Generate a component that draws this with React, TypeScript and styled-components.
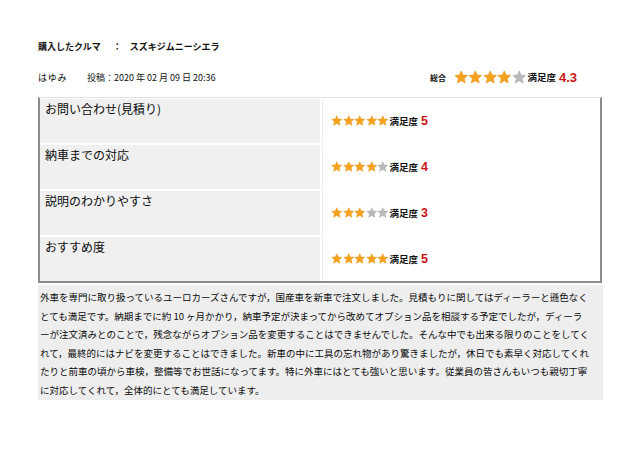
import styled, { createGlobalStyle } from "styled-components";

const GlobalStyle = createGlobalStyle`
  body {
    margin: 0;
    background: #ffffff;
    font-family: "Noto Sans CJK JP", "Noto Sans", sans-serif;
    color: #111111;
  }
`;

const ratings = [
  { label: "お問い合わせ(見積り)", value: 5 },
  { label: "納車までの対応", value: 4 },
  { label: "説明のわかりやすさ", value: 3 },
  { label: "おすすめ度", value: 5 },
];

const comment = [
  "外車を専門に取り扱っているユーロカーズさんですが，国産車を新車で注文しました。見積もりに関してはディーラーと遜色なく",
  "とても満足です。納期までに約 10 ヶ月かかり，納車予定が決まってから改めてオプション品を相談する予定でしたが，ディーラ",
  "ーが注文済みとのことで，残念ながらオプション品を変更することはできませんでした。そんな中でも出来る限りのことをしてく",
  "れて，最終的にはナビを変更することはできました。新車の中に工具の忘れ物があり驚きましたが，休日でも素早く対応してくれ",
  "たりと前車の頃から車検，整備等でお世話になってます。特に外車にはとても強いと思います。従業員の皆さんもいつも親切丁寧",
  "に対応してくれて，全体的にとても満足しています。",
];

const Star = ({ on, size }: { on: boolean; size: number }) => (
  <svg width={size} height={size} viewBox="0 0 24 24">
    <polygon
      points="12,1.5 15,8.3 22.5,9 16.8,14 18.5,21.5 12,17.6 5.5,21.5 7.2,14 1.5,9 9,8.3"
      fill={on ? "#f5a31e" : "#b9b9b9"}
      stroke={on ? "#e8900c" : "#a8a8a8"}
      strokeWidth="1"
      strokeLinejoin="round"
    />
  </svg>
);

const Stars = ({ value, size }: { value: number; size: number }) => (
  <StarRow>
    {[1, 2, 3, 4, 5].map((i) => (
      <Star key={i} on={i <= value} size={size} />
    ))}
  </StarRow>
);

export default function App() {
  return (
    <>
      <GlobalStyle />
      <Page>
        <Title>
          購入したクルマ<Colon>：</Colon>スズキジムニーシエラ
        </Title>
        <MetaRow>
          <MetaLeft>
            <Author>はゆみ</Author>
            <Posted>投稿：2020 年 02 月 09 日 20:36</Posted>
          </MetaLeft>
          <Overall>
            <OverallLabel>総合</OverallLabel>
            <Stars value={4} size={14.5} />
            <Satisfaction>満足度</Satisfaction>
            <Score $big>4.3</Score>
          </Overall>
        </MetaRow>
        <Table>
          {ratings.map((r) => (
            <Row key={r.label}>
              <LabelCell>{r.label}</LabelCell>
              <ValueCell>
                <Stars value={r.value} size={11.5} />
                <Satisfaction>満足度</Satisfaction>
                <Score>{r.value}</Score>
              </ValueCell>
            </Row>
          ))}
        </Table>
        <Comment>
          {comment.map((line, i) => (
            <Line key={i}>{line}</Line>
          ))}
        </Comment>
      </Page>
    </>
  );
}

const Page = styled.div`
  width: 640px;
  height: 451px;
  box-sizing: border-box;
  padding: 40px 37px 0 38px;
`;

const Title = styled.div`
  height: 14px;
  line-height: 14px;
  font-size: 9px;
  font-weight: 700;
  color: #111;
`;

const Colon = styled.span`
  margin: 0 8px 0 12px;
`;

const MetaRow = styled.div`
  display: flex;
  align-items: center;
  justify-content: space-between;
  height: 16px;
  margin-top: 15px;
  padding-right: 26px;
`;

const MetaLeft = styled.div`
  display: flex;
  align-items: center;
  font-size: 9px;
  color: #111;
`;

const Author = styled.span`
  letter-spacing: 0.8px;
  width: 49px;
`;

const Posted = styled.span``;

const Overall = styled.div`
  display: flex;
  align-items: center;
`;

const OverallLabel = styled.span`
  font-size: 8px;
  font-weight: 700;
  margin-right: 8px;
`;

const StarRow = styled.span`
  display: inline-flex;
  align-items: center;
`;

const Satisfaction = styled.span`
  font-size: 9.5px;
  font-weight: 700;
  color: #111;
  margin-left: 1px;
`;

const Score = styled.span<{ $big?: boolean }>`
  font-family: "Liberation Sans", Arial, sans-serif;
  font-weight: 700;
  font-size: ${(p) => (p.$big ? "13px" : "12.5px")};
  color: #c81414;
  margin-left: 3px;
`;

const Table = styled.div`
  margin-top: 12px;
  width: 564px;
  box-sizing: border-box;
  display: flex;
  flex-direction: column;
  gap: 2px;
  padding: 1px 0 0 0;
  border-top: 1px solid #e2e2e2;
  border-left: 2px solid #8c8c8c;
  border-right: 2px solid #8c8c8c;
  border-bottom: 2px solid #8c8c8c;
`;

const Row = styled.div`
  display: grid;
  grid-template-columns: 280px 1fr;
  gap: 2px;
  height: 44px;
`;

const LabelCell = styled.div`
  background: #f0f0f0;
  padding: 3px 0 0 5px;
  font-size: 12px;
  line-height: 14px;
  color: #0a0a0a;
`;

const ValueCell = styled.div`
  display: flex;
  align-items: center;
  padding-left: 8px;
  border-left: 1px solid #ececec;
  background: #ffffff;
`;

const Comment = styled.div`
  margin-top: 2px;
  width: 565px;
  box-sizing: border-box;
  background: #eeeeee;
  padding: 3px 0 1px 2px;
  font-size: 9.5px;
  line-height: 18.5px;
  color: #0a0a0a;
`;

const Line = styled.div`
  white-space: nowrap;
`;
